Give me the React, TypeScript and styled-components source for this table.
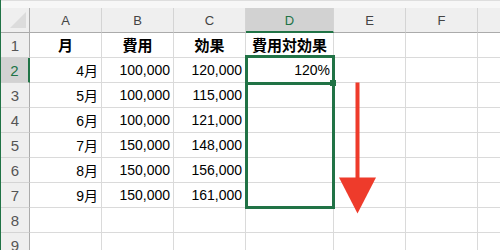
import React from "react";
import styled, { createGlobalStyle } from "styled-components";

const GREEN = "#217346";
const GRID_LINE = "#dadada";
const HEADER_BG = "#efefef";
const HEADER_SELECTED_BG = "#d2d2d2";
const HEADER_EDGE = "#ababab";

const GlobalStyle = createGlobalStyle`
	html, body {
		margin: 0;
		width: 500px;
		height: 250px;
		overflow: hidden;
		background: #ffffff;
	}
`;

// the last column only peeks in at the right edge, so its letter stays out of view
const columns = ["A", "B", "C", "D", "E", "F", ""];

const rows: string[][] = [
	["月", "費用", "効果", "費用対効果"],
	["4月", "100,000", "120,000", "120%"],
	["5月", "100,000", "115,000"],
	["6月", "100,000", "121,000"],
	["7月", "150,000", "148,000"],
	["8月", "150,000", "156,000"],
	["9月", "150,000", "161,000"],
	[],
	[],
];

const App: React.FC = () => {
	return (
		<>
			<GlobalStyle />
			<Window>
				<TopStrip />
				<Sheet>
					<Corner $row={1} $col={1}>
						<CornerMark />
					</Corner>
					{columns.map((col, c) => (
						<ColHeader key={c} $row={1} $col={c + 2} $selected={col === "D"}>
							{col}
						</ColHeader>
					))}
					{rows.map((row, r) => (
						<React.Fragment key={r}>
							<RowHeader $row={r + 2} $col={1} $selected={r === 1}>
								{r + 1}
							</RowHeader>
							{columns.map((_, c) => (
								<Cell key={c} $row={r + 2} $col={c + 2} $title={r === 0}>
									{row[c] ?? ""}
								</Cell>
							))}
						</React.Fragment>
					))}
					<FillPreview />
					<ActiveCell>
						<FillHandle />
					</ActiveCell>
					<ArrowLayer>
						<svg width="72" height="175" viewBox="0 0 72 175">
							<rect x="21.5" y="24.5" width="4" height="96" fill="#ee3b2b" />
							<polygon points="5,119.5 42,119.5 23.5,155.5" fill="#ee3b2b" />
						</svg>
					</ArrowLayer>
				</Sheet>
			</Window>
		</>
	);
};

export default App;

type Slot = { $row: number; $col: number };

const Window = styled.div`
	display: flex;
	flex-direction: column;
	width: 500px;
	height: 250px;
	box-sizing: border-box;
	overflow: hidden;
	border-left: 1px solid ${GREEN};
	background: #ffffff;
`;

const TopStrip = styled.div`
	flex: none;
	height: 8px;
	box-sizing: border-box;
	border-top: 1px solid #dedede;
	background: #f7f7f7;
`;

const Sheet = styled.div`
	display: grid;
	grid-template-columns: 29px 72px 72px 72px 88px 72px 72px 72px;
	grid-auto-rows: 25px;
	font-family: "Liberation Sans", "Noto Sans CJK JP", sans-serif;
`;

const Corner = styled.div<Slot>`
	grid-row: ${(p) => p.$row};
	grid-column: ${(p) => p.$col};
	position: relative;
	box-sizing: border-box;
	background: ${HEADER_BG};
	border-right: 1px solid ${HEADER_EDGE};
	border-bottom: 1px solid ${HEADER_EDGE};
`;

const CornerMark = styled.span`
	position: absolute;
	left: 9px;
	top: 4px;
	width: 16px;
	height: 16px;
	background: #dcdcdc;
	clip-path: polygon(0 100%, 100% 0, 100% 100%);
`;

const ColHeader = styled.div<Slot & { $selected?: boolean }>`
	grid-row: ${(p) => p.$row};
	grid-column: ${(p) => p.$col};
	display: flex;
	align-items: center;
	justify-content: center;
	box-sizing: border-box;
	background: ${(p) => (p.$selected ? HEADER_SELECTED_BG : HEADER_BG)};
	border-right: 1px solid #d4d4d4;
	border-bottom: ${(p) => (p.$selected ? `2px solid ${GREEN}` : `1px solid ${HEADER_EDGE}`)};
	color: ${(p) => (p.$selected ? GREEN : "#444444")};
	font-size: 13px;
	padding-top: 1px;
`;

const RowHeader = styled.div<Slot & { $selected?: boolean }>`
	grid-row: ${(p) => p.$row};
	grid-column: ${(p) => p.$col};
	display: flex;
	align-items: center;
	justify-content: center;
	box-sizing: border-box;
	background: ${(p) => (p.$selected ? HEADER_SELECTED_BG : HEADER_BG)};
	border-right: ${(p) => (p.$selected ? `2px solid ${GREEN}` : `1px solid ${HEADER_EDGE}`)};
	border-bottom: 1px solid #d4d4d4;
	color: ${(p) => (p.$selected ? GREEN : "#555555")};
	font-size: 15px;
`;

const Cell = styled.div<Slot & { $title?: boolean }>`
	grid-row: ${(p) => p.$row};
	grid-column: ${(p) => p.$col};
	display: flex;
	align-items: center;
	justify-content: ${(p) => (p.$title ? "center" : "flex-end")};
	box-sizing: border-box;
	padding: 0 3px 1px;
	border-right: 1px solid ${GRID_LINE};
	border-bottom: 1px solid ${GRID_LINE};
	color: #000000;
	font-size: ${(p) => (p.$title ? "15px" : "14px")};
	font-weight: ${(p) => (p.$title ? 700 : 400)};
	white-space: nowrap;
`;

const FillPreview = styled.div`
	position: relative;
	z-index: 1;
	grid-column: 5 / 6;
	grid-row: 3 / 9;
	margin: -3px -1px -1px -1px;
	border: 3px solid ${GREEN};
	pointer-events: none;
`;

const ActiveCell = styled.div`
	position: relative;
	z-index: 2;
	grid-column: 5 / 6;
	grid-row: 3 / 4;
	margin: -3px -1px -2px -1px;
	border: 3px solid ${GREEN};
	pointer-events: none;
`;

const FillHandle = styled.span`
	position: absolute;
	right: -4px;
	bottom: -4px;
	width: 6px;
	height: 6px;
	background: ${GREEN};
`;

const ArrowLayer = styled.div`
	position: relative;
	z-index: 3;
	grid-column: 6 / 7;
	grid-row: 3 / 10;
	pointer-events: none;

	svg {
		display: block;
	}
`;
